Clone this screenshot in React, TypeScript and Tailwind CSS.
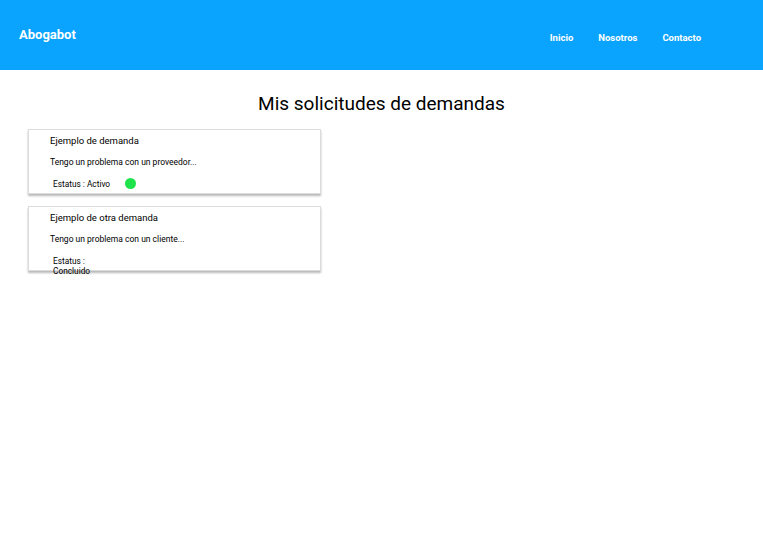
import React from "react";

type Demanda = { title: string; text: string; status: string; active: boolean };

const demandas: Demanda[] = [
  { title: "Ejemplo de demanda", text: "Tengo un problema con un proveedor...", status: "Activo", active: true },
  { title: "Ejemplo de otra demanda", text: "Tengo un problema con un cliente...", status: "Concluido", active: false },
];

function Card({ d }: { d: Demanda }) {
  return (
    <div className="w-[293px] h-[65px] border border-[#dcdcdc] bg-white shadow-[0_2px_2px_rgba(0,0,0,0.28)] flex flex-col pl-[21px] text-black">
      <div className="mt-[5px] text-[9.5px] leading-[12px]">{d.title}</div>
      <div className="mt-[10px] text-[8.5px] leading-[10px]">{d.text}</div>
      <div className="mt-[11px] ml-[3px] flex items-start">
        <div className="mt-[1px] w-[60px] text-[8.3px] leading-[10px]">Estatus : {d.status}</div>
        {d.active && <div className="ml-[12px] w-[11px] h-[11px] rounded-full bg-[#1ee34b]" />}
      </div>
    </div>
  );
}

export default function App() {
  return (
    <div className="min-h-[542px] bg-white" style={{ fontFamily: "Roboto, 'Noto Sans', sans-serif" }}>
      <header className="h-[70px] bg-[#0aa3fe] flex items-center justify-between pl-[19px] pr-[62px] text-white">
        <div className="text-[13px] font-bold">Abogabot</div>
        <nav className="mt-[7px] flex gap-[25px] text-[9.5px] font-bold">
          <span>Inicio</span>
          <span>Nosotros</span>
          <span>Contacto</span>
        </nav>
      </header>
      <h1 className="mt-[22px] text-center text-[19px] leading-[24px] text-black">Mis solicitudes de demandas</h1>
      <div className="mt-[13px] ml-[28px] flex flex-col gap-[12px]">
        {demandas.map((d) => (
          <Card key={d.title} d={d} />
        ))}
      </div>
    </div>
  );
}
